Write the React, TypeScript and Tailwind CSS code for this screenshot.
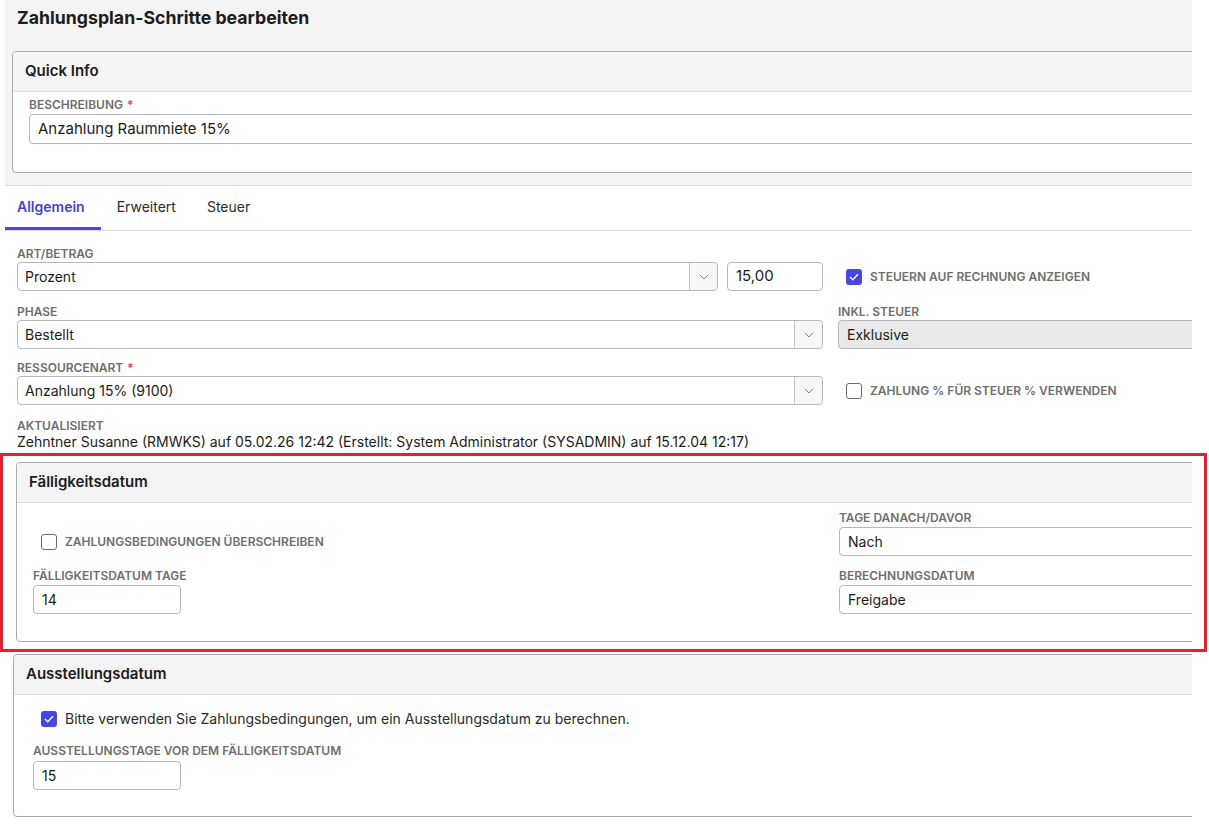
import React from "react";

const font = { fontFamily: "Inter, 'Noto Sans', sans-serif" };

function Label({ children, required }: { children: React.ReactNode; required?: boolean }) {
  return (
    <div className="h-4 text-[12px] leading-4 font-semibold uppercase text-[#6e6e6e] whitespace-nowrap">
      {children}
      {required && <span className="ml-1 text-[#e5484d]">*</span>}
    </div>
  );
}

function Chevron() {
  return (
    <svg width="10" height="6" viewBox="0 0 10 6" fill="none">
      <path d="M1 1l4 4 4-4" stroke="#8a8a8a" strokeWidth="1" />
    </svg>
  );
}

function Select({ value }: { value: string }) {
  return (
    <div className="flex h-[29px] rounded-[4px] border border-[#b8b8b8] bg-white">
      <div className="flex-1 flex items-center pl-[7px] text-[14px] text-[#1c1c1c]">{value}</div>
      <div className="w-[28px] flex items-center justify-center border-l border-[#c4c4c4] bg-[#f6f6f6] rounded-r-[4px]">
        <Chevron />
      </div>
    </div>
  );
}

function Input({ value, className = "", gray }: { value: string; className?: string; gray?: boolean }) {
  return (
    <div
      className={`flex h-[29px] items-center rounded-[4px] border border-[#b8b8b8] px-2 text-[14px] text-[#1c1c1c] ${
        gray ? "bg-[#e9e9e9]" : "bg-white"
      } ${className}`}
    >
      {value}
    </div>
  );
}

function Checkbox({ checked }: { checked?: boolean }) {
  return checked ? (
    <span className="flex h-4 w-4 shrink-0 items-center justify-center rounded-[3px] bg-[#4747e0]">
      <svg width="10" height="8" viewBox="0 0 10 8" fill="none">
        <path d="M1 4l2.8 2.8L9 1.2" stroke="white" strokeWidth="1.3" />
      </svg>
    </span>
  ) : (
    <span className="h-4 w-4 shrink-0 rounded-[3px] border border-[#6b6b6b] bg-white" />
  );
}

function CheckLabel({ checked, text }: { checked?: boolean; text: string }) {
  return (
    <div className="flex items-center gap-2">
      <Checkbox checked={checked} />
      <span className="text-[12px] font-semibold uppercase text-[#6e6e6e] whitespace-nowrap">{text}</span>
    </div>
  );
}

function CardHeader({ title }: { title: string }) {
  return (
    <div className="h-[40px] flex items-center px-3 bg-[#f4f4f4] border-b border-[#dcdcdc] rounded-t-[4px] text-[15px] font-semibold text-[#1c1c1c]">
      {title}
    </div>
  );
}

export default function App() {
  return (
    <div className="relative w-[1209px] h-[825px] overflow-hidden bg-white" style={font}>
      <div className="ml-[5px] w-[1187px] overflow-hidden">
        {/* Kopfbereich */}
        <div className="bg-[#f4f4f4] border-b border-[#dcdcdc] pb-[12px]">
          <h1 className="h-[36px] pt-[6px] pl-3 text-[17.7px] leading-6 font-bold text-[#1c1c1c]">
            Zahlungsplan-Schritte bearbeiten
          </h1>
          <div className="ml-[7px] mt-[15px] w-[1220px] rounded-[4px] border border-[#ababab] bg-white">
            <CardHeader title="Quick Info" />
            <div className="pl-4 pt-[5px] pb-[28px]">
              <Label required>Beschreibung</Label>
              <div className="mt-[1px] flex h-[30px] items-center rounded-[4px] border border-[#b8b8b8] px-2 text-[15px] text-[#1c1c1c]">
                Anzahlung Raummiete 15%
              </div>
            </div>
          </div>
        </div>

        {/* Tabs */}
        <div className="flex h-[45px] border-b border-[#dcdcdc]">
          <div className="flex items-center pl-3 pr-4 border-b-[3px] border-[#4747e0] text-[14px] font-semibold text-[#4343d8]">
            Allgemein
          </div>
          <div className="flex items-center pl-[16px] pb-[3px] text-[14px] text-[#2a2a2a]">Erweitert</div>
          <div className="flex items-center pl-[31px] pb-[3px] text-[14px] text-[#2a2a2a]">Steuer</div>
        </div>

        {/* Formular */}
        <div className="px-3 pt-[15px]">
          <div className="grid grid-cols-[806px_1fr] gap-x-[15px]">
            <div>
              <Label>Art/Betrag</Label>
              <div className="flex gap-[9px]">
                <div className="w-[701px]">
                  <Select value="Prozent" />
                </div>
                <Input value="15,00" className="w-[96px] text-[15px]" />
              </div>
            </div>
            <div className="pt-[16px]">
              <div className="h-[29px] flex items-center pl-2">
                <CheckLabel checked text="Steuern auf Rechnung anzeigen" />
              </div>
            </div>

            <div className="mt-[13px]">
              <Label>Phase</Label>
              <Select value="Bestellt" />
            </div>
            <div className="mt-[13px]">
              <Label>Inkl. Steuer</Label>
              <Input value="Exklusive" gray className="w-[380px]" />
            </div>

            <div className="mt-[11px]">
              <Label required>Ressourcenart</Label>
              <Select value="Anzahlung 15% (9100)" />
            </div>
            <div className="mt-[11px] pt-[16px]">
              <div className="h-[29px] flex items-center pl-2">
                <CheckLabel text="Zahlung % für Steuer % verwenden" />
              </div>
            </div>
          </div>

          <div className="mt-[13px]">
            <Label>Aktualisiert</Label>
            <div className="text-[14px] leading-4 text-[#1c1c1c] whitespace-nowrap">
              Zehntner Susanne (RMWKS) auf 05.02.26 12:42 (Erstellt: System Administrator (SYSADMIN) auf 15.12.04 12:17)
            </div>
          </div>
        </div>

        {/* Fälligkeitsdatum */}
        <div className="ml-[11px] mt-[12px] w-[1220px] rounded-[4px] border border-[#ababab] bg-white">
          <CardHeader title="Fälligkeitsdatum" />
          <div className="grid grid-cols-[806px_1fr] pl-4 pt-[7px] pb-[27px]">
            <div className="flex items-end h-[46px] pb-[5px] pl-2">
              <CheckLabel text="Zahlungsbedingungen überschreiben" />
            </div>
            <div>
              <Label>Tage danach/davor</Label>
              <Input value="Nach" className="mt-px" />
            </div>
            <div className="mt-[12px]">
              <Label>Fälligkeitsdatum Tage</Label>
              <Input value="14" className="w-[148px] mt-px" />
            </div>
            <div className="mt-[12px]">
              <Label>Berechnungsdatum</Label>
              <Input value="Freigabe" className="mt-px" />
            </div>
          </div>
        </div>

        {/* Ausstellungsdatum */}
        <div className="ml-[8px] mt-[12px] w-[1220px] rounded-[4px] border border-[#ababab] bg-white">
          <CardHeader title="Ausstellungsdatum" />
          <div className="pl-[19px] pt-[13px] pb-[26px]">
            <div className="flex items-center gap-2 pl-2">
              <Checkbox checked />
              <span className="text-[14px] text-[#2a2a2a]">
                Bitte verwenden Sie Zahlungsbedingungen, um ein Ausstellungsdatum zu berechnen.
              </span>
            </div>
            <div className="mt-[14px]">
              <Label>Ausstellungstage vor dem Fälligkeitsdatum</Label>
              <Input value="15" className="w-[148px] mt-[2px]" />
            </div>
          </div>
        </div>
      </div>

      {/* Markierung */}
      <div className="pointer-events-none absolute left-0 top-[453px] h-[199px] w-[1207px] border-[3px] border-[#e8202a]" />
    </div>
  );
}
